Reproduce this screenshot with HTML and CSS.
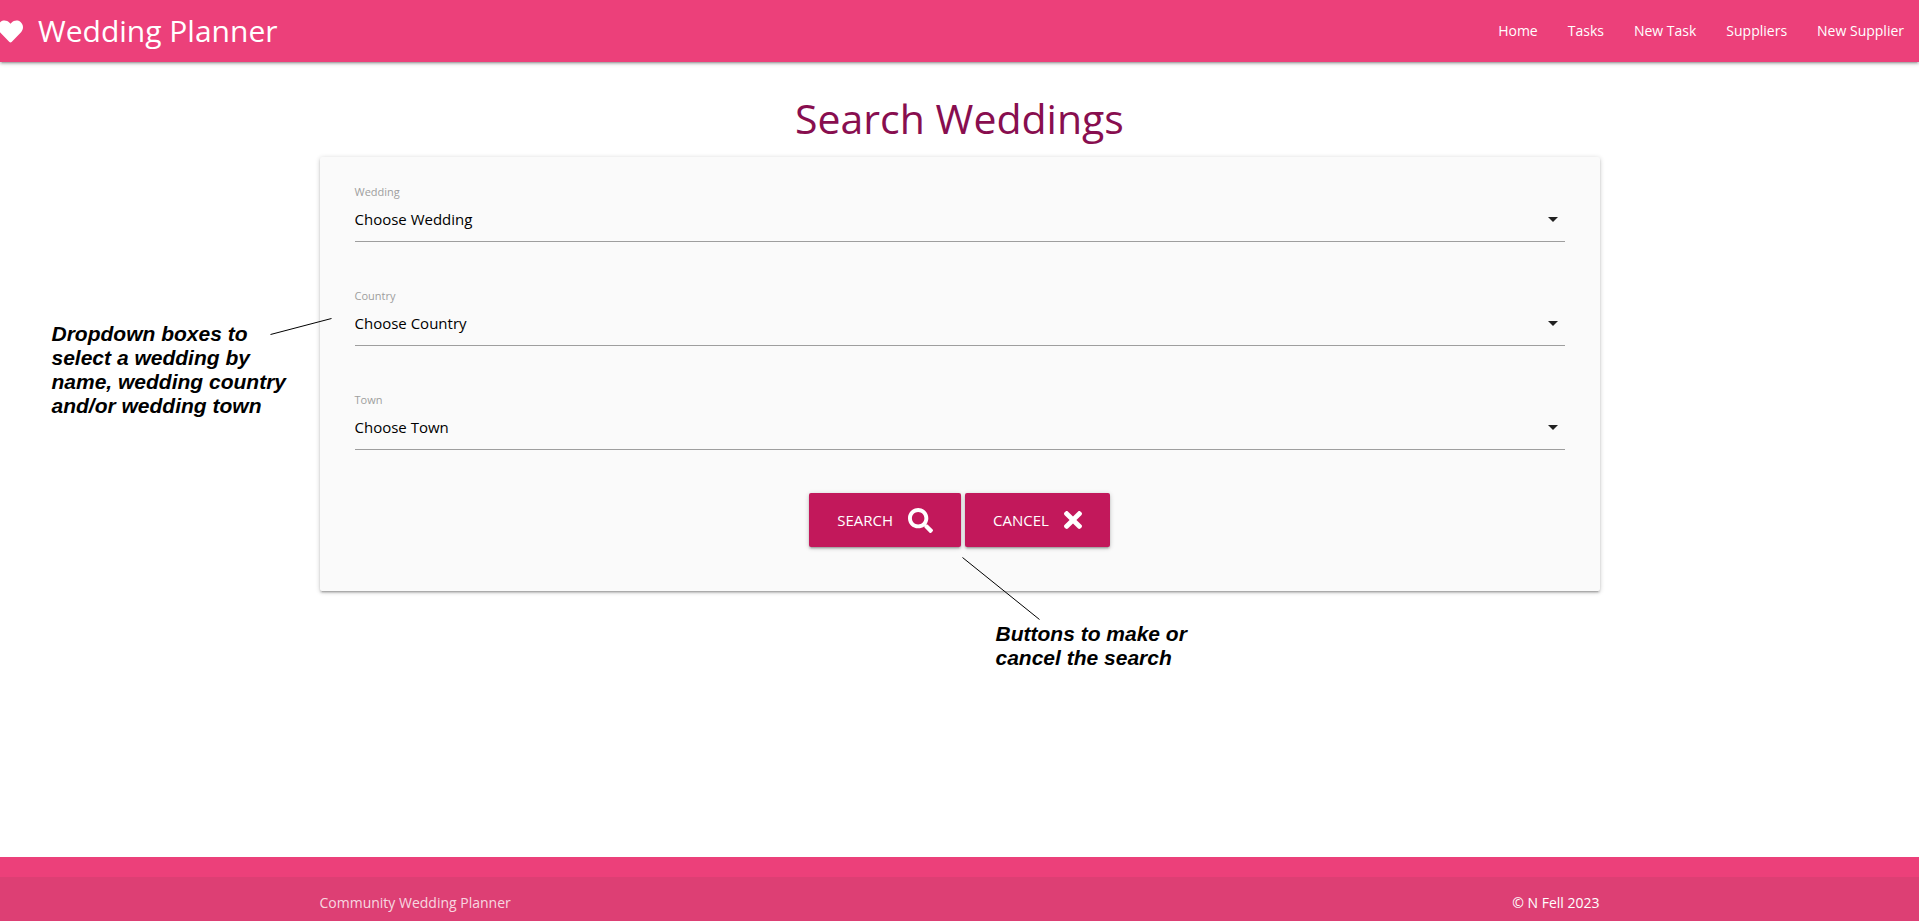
FILE: index.html
```html
<!DOCTYPE html>
<html lang="en">
<head>
<meta charset="utf-8">
<meta name="viewport" content="width=device-width, initial-scale=1">
<title>Wedding Planner</title>
<link rel="stylesheet" href="styles.css">
</head>
<body>
<header class="navbar">
  <a class="brand" href="#">
    <svg class="brand-icon" viewBox="0 0 512 512" aria-hidden="true"><path fill="currentColor" d="M462.300 62.600C407.500 15.900 326 24.300 275.700 76.200L256 96.500l-19.700-20.300C186.100 24.300 104.500 15.900 49.700 62.600c-62.800 53.600-66.100 149.800-9.900 207.900l193.500 199.800c12.500 12.900 32.800 12.900 45.300 0l193.500-199.800c56.300-58.100 53-154.300-9.800-207.900z"/></svg>
    <span>Wedding Planner</span>
  </a>
  <nav class="menu">
    <a href="#">Home</a>
    <a href="#">Tasks</a>
    <a href="#">New Task</a>
    <a href="#">Suppliers</a>
    <a href="#">New Supplier</a>
  </nav>
</header>

<main class="content">
  <h1 class="title">Search Weddings</h1>
  <div class="panel">
    <form class="card">
      <div class="fields">
        <div class="field">
          <label for="wedding">Wedding</label>
          <div class="select-wrap">
            <select id="wedding"><option>Choose Wedding</option></select>
            <svg class="caret" viewBox="0 0 10 5" aria-hidden="true"><path d="M0 0h10L5 5z"/></svg>
          </div>
        </div>
        <div class="field">
          <label for="country">Country</label>
          <div class="select-wrap">
            <select id="country"><option>Choose Country</option></select>
            <svg class="caret" viewBox="0 0 10 5" aria-hidden="true"><path d="M0 0h10L5 5z"/></svg>
          </div>
        </div>
        <div class="field">
          <label for="town">Town</label>
          <div class="select-wrap">
            <select id="town"><option>Choose Town</option></select>
            <svg class="caret" viewBox="0 0 10 5" aria-hidden="true"><path d="M0 0h10L5 5z"/></svg>
          </div>
        </div>
      </div>
      <div class="actions">
        <button class="btn" type="submit">SEARCH
          <svg class="icon-search" viewBox="0 0 512 512" aria-hidden="true"><path fill="currentColor" d="M505 442.700L405.300 343c-4.500-4.500-10.600-7-17-7H372c27.600-35.300 44-79.700 44-128C416 93.100 322.900 0 208 0S0 93.100 0 208s93.100 208 208 208c48.300 0 92.700-16.400 128-44v16.300c0 6.400 2.500 12.500 7 17l99.700 99.700c9.400 9.400 24.600 9.400 33.900 0l28.300-28.300c9.400-9.400 9.400-24.600.1-34zM208 336c-70.700 0-128-57.200-128-128 0-70.700 57.200-128 128-128 70.700 0 128 57.200 128 128 0 70.700-57.200 128-128 128z"/></svg>
        </button>
        <button class="btn" type="button">CANCEL
          <svg class="icon-times" viewBox="0 80 352 352" aria-hidden="true"><path fill="currentColor" d="M242.720 256l100.070-100.070c12.280-12.280 12.280-32.190 0-44.480l-22.240-22.240c-12.280-12.280-32.190-12.280-44.480 0L176 189.280 75.930 89.210c-12.280-12.280-32.190-12.280-44.480 0L9.210 111.450c-12.280 12.280-12.280 32.190 0 44.480L109.280 256 9.210 356.070c-12.280 12.280-12.280 32.190 0 44.480l22.240 22.240c12.280 12.280 32.200 12.280 44.480 0L176 322.720l100.070 100.070c12.280 12.280 32.200 12.280 44.480 0l22.240-22.240c12.280-12.280 12.280-32.190 0-44.480L242.720 256z"/></svg>
        </button>
      </div>
    </form>
    <svg class="pointer pointer-fields" viewBox="0 0 62 17" aria-hidden="true"><path d="M0.500 16.500L61.500 0.500"/></svg>
    <p class="note note-fields">Dropdown boxes to<br>select a wedding by<br>name, wedding country<br>and/or wedding town</p>
    <svg class="pointer pointer-actions" viewBox="0 0 78 63" aria-hidden="true"><path d="M0.500 0.500L77.500 62.500"/></svg>
    <p class="note note-actions">Buttons to make or<br>cancel the search</p>
  </div>
</main>

<footer class="footer">
  <div class="footer-bar">
    <div class="footer-inner">
      <span class="footer-name">Community Wedding Planner</span>
      <span>© N Fell 2023</span>
    </div>
  </div>
</footer>
</body>
</html>
```
FILE: styles.css
```css
* { box-sizing: border-box; }

body {
  margin: 0;
  min-height: 100vh;
  display: flex;
  flex-direction: column;
  background: #fff;
  color: #000;
  font-family: "Open Sans", "Noto Sans", sans-serif;
  font-size: 15px;
}

a { color: inherit; text-decoration: none; }

.navbar {
  height: 62px;
  display: flex;
  align-items: center;
  justify-content: space-between;
  background: #ec407a;
  color: #fff;
  box-shadow: 0 2px 2px rgba(0, 0, 0, .14), 0 3px 1px -2px rgba(0, 0, 0, .12), 0 1px 5px rgba(0, 0, 0, .2);
}

.brand {
  display: flex;
  align-items: center;
  gap: 15px;
  margin-left: -2px;
  font-size: 30px;
  line-height: 62px;
}
.brand-icon { width: 25px; height: 25px; }

.menu {
  display: flex;
  gap: 30px;
  padding-right: 15px;
  font-size: 14px;
  line-height: 62px;
}

.content { flex: 1; }

.title {
  margin: 28px 0 11px;
  color: #880e4f;
  font-size: 41px;
  font-weight: 400;
  line-height: 56px;
  text-align: center;
}

.panel,
.footer-inner {
  width: 90%;
  max-width: 1280px;
  margin: 0 auto;
}
.panel { position: relative; }

.card {
  padding: 27px 35px 44px;
  background: #fafafa;
  border-radius: 2px;
  box-shadow: 0 2px 2px rgba(0, 0, 0, .14), 0 3px 1px -2px rgba(0, 0, 0, .12), 0 1px 5px rgba(0, 0, 0, .2);
}

.fields {
  display: flex;
  flex-direction: column;
  gap: 46px;
  margin-bottom: 43px;
}
.field label {
  display: block;
  color: #9e9e9e;
  font-size: 11px;
  line-height: 16px;
}
.select-wrap { position: relative; }
.select-wrap select {
  display: block;
  width: 100%;
  height: 42px;
  padding: 0 0 4px;
  appearance: none;
  background: transparent;
  border: 0;
  border-bottom: 1px solid #9e9e9e;
  border-radius: 0;
  color: #000;
  font: inherit;
}
.caret {
  position: absolute;
  right: 7px;
  top: 17px;
  width: 10px;
  height: 5px;
  fill: #212121;
  pointer-events: none;
}

.actions {
  display: flex;
  justify-content: center;
  gap: 4px;
}
.btn {
  display: flex;
  align-items: center;
  gap: 15px;
  height: 54px;
  padding: 0 28px;
  background: #c2185b;
  border: 0;
  border-radius: 2px;
  color: #fff;
  font: inherit;
  box-shadow: 0 2px 2px rgba(0, 0, 0, .14), 0 3px 1px -2px rgba(0, 0, 0, .12), 0 1px 5px rgba(0, 0, 0, .2);
}
.icon-search { width: 25px; height: 25px; }
.icon-times { width: 18px; height: 18px; }

/* Annotations drawn over the panel */
.note,
.pointer { position: absolute; }
.note {
  margin: 0;
  font: italic bold 21px/24px "Liberation Sans", Arial, sans-serif;
  white-space: nowrap;
}
.pointer { fill: none; stroke: #000; stroke-width: 1; }
.note-fields { left: -268px; top: 165px; }
.pointer-fields { left: -50px; top: 161px; width: 62px; height: 17px; }
.note-actions { left: calc(50% + 36px); top: calc(100% + 31px); }
.pointer-actions { left: calc(50% + 2px); bottom: -29px; width: 78px; height: 63px; }

.footer {
  padding-top: 20px;
  background: #ec407a;
  color: #fff;
}
.footer-bar {
  padding-top: 8px;
  background: rgba(51, 51, 51, .08);
}
.footer-inner {
  display: flex;
  justify-content: space-between;
  font-size: 14px;
  line-height: 36px;
}
.footer-name { color: rgba(255, 255, 255, .8); }
```
